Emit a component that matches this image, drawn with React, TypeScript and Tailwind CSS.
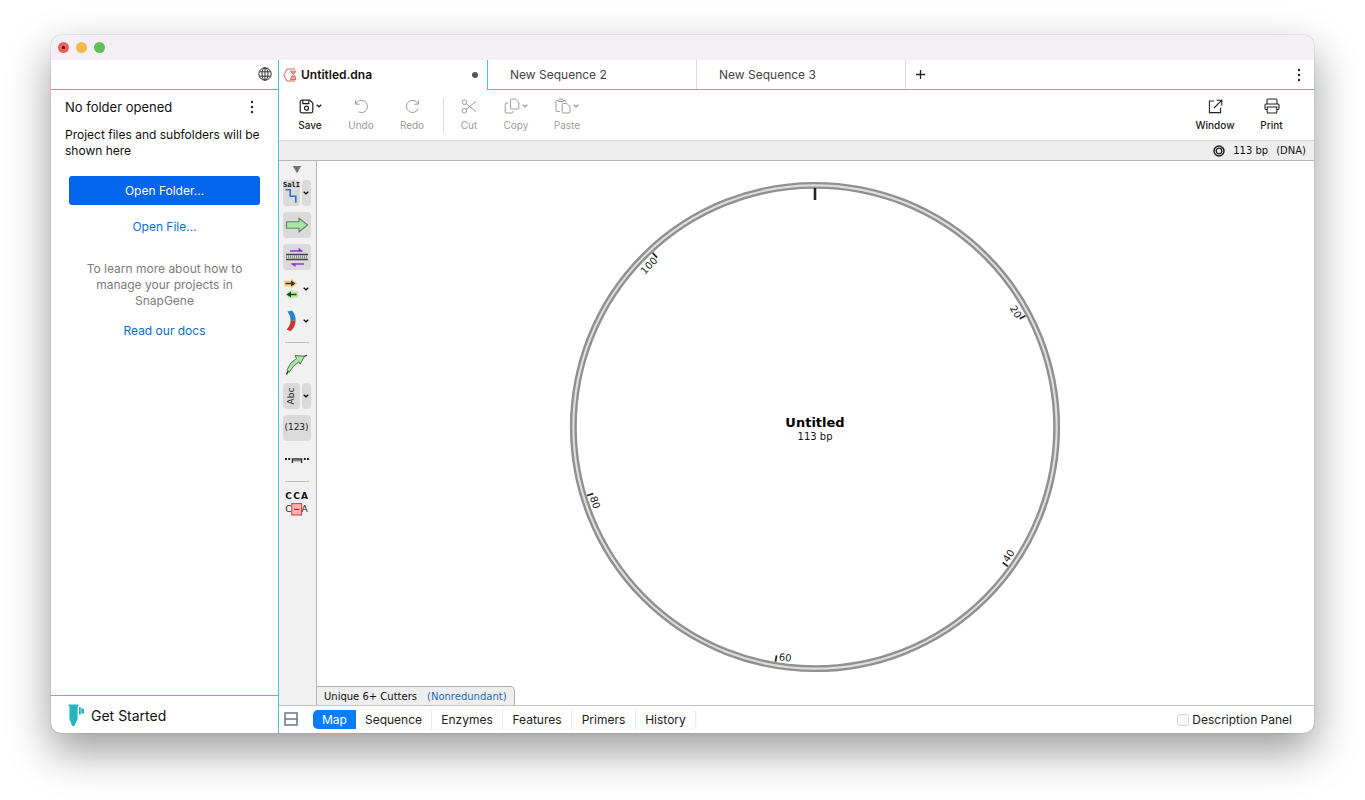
import { useState, type ReactNode } from "react";

const UI = "font-['Inter','Liberation_Sans',sans-serif]";
const MAP_FONT = "font-['DejaVu_Sans',sans-serif]";

function Globe() {
  return (
    <svg width="14" height="14" viewBox="0 0 14 14" fill="none" stroke="#333" strokeWidth="1">
      <circle cx="7" cy="7" r="6.2" />
      <ellipse cx="7" cy="7" rx="3" ry="6.2" />
      <path d="M7 1v12M1.6 4.8h10.8M1.6 9.2h10.8" />
    </svg>
  );
}

function Dots() {
  return (
    <svg width="4" height="14" viewBox="0 0 4 14" fill="#222">
      <circle cx="2" cy="2" r="1.2" />
      <circle cx="2" cy="7" r="1.2" />
      <circle cx="2" cy="12" r="1.2" />
    </svg>
  );
}

function Caret() {
  return (
    <svg width="6" height="4" viewBox="0 0 6 4" fill="none" stroke="currentColor" strokeWidth="1.3">
      <path d="M0.7 0.8L3 2.8L5.3 0.8" />
    </svg>
  );
}

function DnaFileIcon() {
  return (
    <svg width="14" height="14" viewBox="0 0 14 14" fill="none" stroke="#e0605c" strokeWidth="1">
      <path d="M12 1H4L0.8 7L4 13H12" />
      <path d="M7.2 3.2H13M7.2 11.6H13M8 3.2C8 6.2 12.4 6.4 12.4 9.4V11.6M12.4 3.2C12.4 6.2 7.8 6.8 7.8 11.6M8.6 4.8h3.4M8.2 10h4M9 8.6h3" />
    </svg>
  );
}

function TubeIcon() {
  return (
    <svg width="17" height="23" viewBox="0 0 17 23" fill="#25b5c3">
      <path d="M0.5 0.5H10.5V2.2H9.6V15L6.6 21.5Q5.2 23 4 21.5L1.4 15V2.2H0.5Z" />
      <path d="M11 3.2H13V4.5H16V9.5H13V10.5H11Z" />
      <path d="M13 3.2V10.5" stroke="#fff" strokeWidth="0.5" />
    </svg>
  );
}

function SaveIcon() {
  return (
    <svg width="15" height="15" viewBox="0 0 15 15" fill="none" stroke="currentColor" strokeWidth="1.2">
      <path d="M3 1.2H10.8L13.8 4.2V12Q13.8 13.8 12 13.8H3Q1.2 13.8 1.2 12V3Q1.2 1.2 3 1.2Z" />
      <path d="M3.8 1.4V4.6H9.8V1.4" />
      <circle cx="7.5" cy="9.2" r="2" />
    </svg>
  );
}

function UndoIcon() {
  return (
    <svg width="15" height="15" viewBox="0 0 15 15" fill="none" stroke="currentColor" strokeWidth="1">
      <path d="M1.5 1.2V5.2H5.6" />
      <path d="M1.8 5A6.1 6.1 0 1 1 4.4 12.8" />
    </svg>
  );
}

function RedoIcon() {
  return (
    <svg width="15" height="15" viewBox="0 0 15 15" fill="none" stroke="currentColor" strokeWidth="1">
      <path d="M13.4 1.2V5.2H9.3" />
      <path d="M13.1 5A6.1 6.1 0 1 0 13.2 9.6" />
    </svg>
  );
}

function CutIcon() {
  return (
    <svg width="16" height="15" viewBox="0 0 16 15" fill="none" stroke="currentColor" strokeWidth="1">
      <circle cx="3.4" cy="3.2" r="2.3" />
      <circle cx="3.4" cy="11.8" r="2.3" />
      <path d="M5.2 4.7L15 12.6M5.2 10.3L15 2.4" />
    </svg>
  );
}

function CopyIcon() {
  return (
    <svg width="16" height="16" viewBox="0 0 16 16" fill="none" stroke="currentColor" strokeWidth="1">
      <path d="M7.5 1H11.5L14.8 4.3V10Q14.8 11 13.8 11H7.5Q6.5 11 6.5 10V2Q6.5 1 7.5 1Z" />
      <path d="M4.4 5H2.2Q1.2 5 1.2 6V14Q1.2 15 2.2 15H7.8Q8.8 15 8.8 14V13.2" />
    </svg>
  );
}

function PasteIcon() {
  return (
    <svg width="16" height="16" viewBox="0 0 16 16" fill="none" stroke="currentColor" strokeWidth="1">
      <path d="M3 2.5H2Q1 2.5 1 3.5V12.5Q1 13.5 2 13.5H4.8M9 2.5H10.4V4" />
      <path d="M3.4 3.4V2L4.8 0.9H7L8.4 2V3.4Z" />
      <path d="M8.2 5.5H11.8L15 8.7V14Q15 15 14 15H8.2Q7.2 15 7.2 14V6.5Q7.2 5.5 8.2 5.5Z" />
    </svg>
  );
}

function WindowIcon() {
  return (
    <svg width="15" height="15" viewBox="0 0 15 15" fill="none" stroke="currentColor" strokeWidth="1.1">
      <path d="M6 2H1.4V13.6H12.6V9" />
      <path d="M8.6 1.2H13.8V6.4M13.6 1.4L6 9" />
    </svg>
  );
}

function PrintIcon() {
  return (
    <svg width="16" height="16" viewBox="0 0 16 16" fill="none" stroke="currentColor" strokeWidth="1.1">
      <path d="M3 6V2.5Q3 1 4.5 1H11.5Q13 1 13 2.5V6" />
      <path d="M3 11.5H2.2Q1 11.5 1 10.3V7.2Q1 6 2.2 6H13.8Q15 6 15 7.2V10.3Q15 11.5 13.8 11.5H13" />
      <path d="M3.2 9H12.8V14Q12.8 15 11.8 15H4.2Q3.2 15 3.2 14Z" />
    </svg>
  );
}

function ToolbarButton(props: { label: string; icon: ReactNode; width: string; menu?: boolean; active?: boolean }) {
  return (
    <button
      type="button"
      disabled={!props.active}
      className={`flex flex-col items-center gap-1 ${props.width} ${props.active ? "text-[#222]" : "text-[#9b9b9b]"}`}
    >
      <span className="flex h-4 items-center gap-0.5">
        {props.icon}
        {props.menu && <Caret />}
      </span>
      <span className={`text-[10px] leading-[14px] ${props.active ? "font-medium" : ""}`}>{props.label}</span>
    </button>
  );
}

function ToolButton(props: { label: string; children: ReactNode; filled?: boolean; menu?: boolean }) {
  const fill = props.filled ? "bg-[#dadada]" : "";
  if (!props.menu) {
    return (
      <button
        type="button"
        aria-label={props.label}
        className={`flex h-[26px] w-7 shrink-0 items-center justify-center rounded ${fill}`}
      >
        {props.children}
      </button>
    );
  }
  return (
    <div className="flex h-[26px] w-7 shrink-0 justify-between">
      <button type="button" aria-label={props.label} className={`flex w-[17px] items-center justify-center rounded ${fill}`}>
        {props.children}
      </button>
      <button type="button" aria-label={`${props.label} options`} className={`flex w-[9px] items-center justify-center rounded ${fill}`}>
        <Caret />
      </button>
    </div>
  );
}

function Divider() {
  return <div className="my-[2px] h-px w-6 shrink-0 bg-[#bdbdbd]" />;
}

function ToolColumn() {
  return (
    <div className="flex w-[38px] shrink-0 flex-col items-center gap-1.5 border-r border-[#b4b4b4] bg-[#f1f1f1] pr-[2px] pt-[3px]">
      <svg width="10" height="10" viewBox="0 0 10 10" className="shrink-0">
        <path d="M0.8 2H9.2L5 9.2Z" fill="#707070" />
      </svg>
      <ToolButton label="Enzymes" filled menu>
        <svg width="17" height="26" viewBox="0 0 17 26" className="overflow-visible">
          <text x="8.5" y="6.6" textAnchor="middle" fontSize="7" fontWeight="700" className="font-['DejaVu_Sans_Mono','DejaVu_Sans',monospace]" fill="#111">
            SalI
          </text>
          <path d="M2.5 9.8H7.2V16.2H12.8V22.8" fill="none" stroke="#2f6fce" strokeWidth="1.6" />
        </svg>
      </ToolButton>
      <ToolButton label="Features" filled>
        <svg width="24" height="16" viewBox="0 0 24 16">
          <path d="M1.5 4.8H14V1.2L22.6 8L14 14.8V11.2H1.5Z" fill="#a6e8a2" stroke="#6d7d6c" strokeWidth="1.1" />
        </svg>
      </ToolButton>
      <ToolButton label="Primers" filled>
        <svg width="24" height="20" viewBox="0 0 24 20" fill="none">
          <path d="M1 7.5H23M1 12.5H23" stroke="#444" strokeWidth="1.3" />
          <path d="M1 10H23" stroke="#888" strokeWidth="3" strokeDasharray="1 1" />
          <path d="M5 4H17M19 17H7" stroke="#9434e0" strokeWidth="1.3" />
          <path d="M13.5 0.8L18.5 4.4H13.5ZM10.5 20L5.5 16.4H10.5Z" fill="#9434e0" />
        </svg>
      </ToolButton>
      <ToolButton label="ORFs" menu>
        <svg width="17" height="22" viewBox="0 0 17 22">
          <path d="M1 2.5H8V0.5L14.5 5.5L8 10.5V8.5H1Z" fill="#fbcf85" />
          <path d="M15 13.5H8.5V11.5L2 16.5L8.5 21.5V19.5H15Z" fill="#aef28a" />
          <path d="M2.5 5.5H10M13.5 16.5H6" stroke="#333" strokeWidth="1.6" />
          <path d="M8 2.6L12.5 5.5L8 8.4ZM8 13.6L3.5 16.5L8 19.4Z" fill="#333" />
        </svg>
      </ToolButton>
      <ToolButton label="Translation" menu>
        <svg width="12" height="22" viewBox="0 0 12 22">
          <path d="M2.5 1.5L7 0.5Q11 5 10.6 10.8H5.6Q5.6 5.5 2.5 1.5Z" fill="#2c82c9" />
          <path d="M5.6 10.8H10.6Q10.2 17.5 5.6 21.2L1.8 19.4Q5.4 15.6 5.6 10.8Z" fill="#cf3433" />
        </svg>
      </ToolButton>
      <Divider />
      <ToolButton label="Feature orientation">
        <svg width="24" height="24" viewBox="0 0 24 24">
          <path d="M1.5 22.5L3.5 18.5M18.5 5L22 3" stroke="#333" strokeWidth="1.4" />
          <path d="M2.2 17.5Q5 10 11.5 6.5L10 3.5L19.5 4.2L15.2 12.2L13.8 9.8Q8 13.5 4 20.5Z" fill="#a6e8a2" stroke="#5c6d5b" strokeWidth="1" />
        </svg>
      </ToolButton>
      <ToolButton label="Labels" filled menu>
        <svg width="14" height="24" viewBox="0 0 14 24">
          <text transform="translate(10 12) rotate(-90)" textAnchor="middle" fontSize="9" className={MAP_FONT} fill="#222">
            Abc
          </text>
        </svg>
      </ToolButton>
      <ToolButton label="Numbering" filled>
        <span className={`${MAP_FONT} text-[9px] text-[#222]`}>(123)</span>
      </ToolButton>
      <ToolButton label="Line spacing">
        <svg width="24" height="8" viewBox="0 0 24 8">
          <path d="M0 3H2M3.2 3H5.2M18.8 3H20.8M22 3H24" stroke="#222" strokeWidth="1.8" />
          <path d="M7.4 7V3H16.6V7" fill="none" stroke="#333" strokeWidth="1.4" />
          <path d="M8 4.6H16" stroke="#888" strokeWidth="1.6" />
        </svg>
      </ToolButton>
      <Divider />
      <ToolButton label="Alignment">
        <svg width="24" height="26" viewBox="0 0 24 26" className={`${MAP_FONT} overflow-visible`} textAnchor="middle" fontSize="9">
          <rect x="6.8" y="13.6" width="9.8" height="11.4" fill="#ffb3b3" stroke="#d93a3a" />
          <g fontWeight="700" fill="#111">
            <text x="3.5" y="9.4">C</text>
            <text x="11.5" y="9.4">C</text>
            <text x="19.6" y="9.4">A</text>
          </g>
          <g fill="#222">
            <text x="3.5" y="22.4">C</text>
            <text x="19.6" y="22.4">A</text>
          </g>
          <path d="M9 19.4H14.4" stroke="#922" strokeWidth="1" />
        </svg>
      </ToolButton>
    </div>
  );
}

const SEQUENCE_LENGTH = 113;
const marks = [
  { bp: 20, flipped: false, shift: -2 },
  { bp: 40, flipped: true, shift: -2.2 },
  { bp: 60, flipped: true, shift: -2.2 },
  { bp: 80, flipped: true, shift: -2.2 },
  { bp: 100, flipped: false, shift: -2.8 },
];

function PlasmidMap() {
  return (
    <svg viewBox="-246 -246 492 492" className={`${MAP_FONT} w-[492px] max-w-full`} role="img" aria-label="Plasmid map">
      <circle r="241.6" fill="none" stroke="#dedede" strokeWidth="4" />
      <circle r="243.9" fill="none" stroke="#909090" strokeWidth="2.4" />
      <circle r="239.4" fill="none" stroke="#909090" strokeWidth="2.4" />
      <path d="M0 -239V-227" stroke="#222" strokeWidth="2.6" />
      {marks.map((m) => {
        const angle = ((m.bp - 0.5) / SEQUENCE_LENGTH) * 360;
        return (
          <g key={m.bp}>
            <path d="M0 -238V-231.5" stroke="#222" strokeWidth="1.8" transform={`rotate(${angle})`} />
            <text
              transform={`rotate(${angle + m.shift}) translate(0 -232) rotate(${m.flipped ? 180 : 0})`}
              y="4"
              textAnchor="middle"
              fontSize="10"
              fill="#222"
            >
              {m.bp}
            </text>
          </g>
        );
      })}
      <text y="0" textAnchor="middle" fontSize="13" fontWeight="700" fill="#000">
        Untitled
      </text>
      <text y="13" textAnchor="middle" fontSize="10" fill="#111">
        113 bp
      </text>
    </svg>
  );
}

function Sidebar() {
  return (
    <aside className="flex w-[228px] shrink-0 flex-col border-r border-[#4fc1c9]">
      <div className="flex h-[30px] items-center justify-end border-b border-[#4fc1c9] px-[6px] pb-0.5">
        <button type="button" aria-label="Language">
          <Globe />
        </button>
      </div>
      <div className="flex flex-1 flex-col px-[14px] pt-[7px]">
        <div className="flex items-center justify-between pr-[10px]">
          <h2 className="text-[13px] leading-5 text-[#111]">No folder opened</h2>
          <button type="button" aria-label="Folder menu">
            <Dots />
          </button>
        </div>
        <p className="mt-2.5 whitespace-nowrap text-[12px] leading-4 text-[#111]">
          Project files and subfolders will be
          <br />
          shown here
        </p>
        <div className="mt-[17px] flex flex-col items-center pl-1 pr-1 text-[12px]">
          <button type="button" className="h-[29px] w-full rounded-[3px] bg-[#0364ec] text-white">
            Open Folder...
          </button>
          <button type="button" className="mt-3.5 leading-4 text-[#0a70d8]">
            Open File...
          </button>
          <p className="mt-[26px] text-center leading-4 text-[#7c7c7c]">
            To learn more about how to
            <br />
            manage your projects in
            <br />
            SnapGene
          </p>
          <a href="#docs" className="mt-3.5 leading-4 text-[#0a6cc4]">
            Read our docs
          </a>
        </div>
      </div>
      <button type="button" className="flex h-[38px] items-center gap-1.5 border-t border-[#4fc1c9] px-[17px] pt-0.5 text-sm text-[#111]">
        <TubeIcon />
        Get Started
      </button>
    </aside>
  );
}

function TabBar() {
  return (
    <div className="flex h-[30px] text-[12px]">
      <button type="button" className="flex w-[208px] items-center gap-1 px-1 font-semibold text-[#111]">
        <DnaFileIcon />
        <span className="flex-1 text-left">Untitled.dna</span>
        <span className="mr-[5px] h-1.5 w-1.5 rounded-full bg-[#555]" />
      </button>
      <div className="flex flex-1 border-b border-l border-[#4fc1c9] text-[#444]">
        <button type="button" className="w-[209px] border-r border-[#dcdcdc] px-[22px] text-left">
          New Sequence 2
        </button>
        <button type="button" className="w-[209px] border-r border-[#dcdcdc] px-[22px] text-left">
          New Sequence 3
        </button>
        <button type="button" aria-label="New tab" className="flex w-[29px] items-center justify-center">
          <svg width="9" height="9" viewBox="0 0 9 9" stroke="#222" strokeWidth="1.3">
            <path d="M4.5 0V9M0 4.5H9" />
          </svg>
        </button>
        <button type="button" aria-label="More" className="ml-auto mr-[13px]">
          <Dots />
        </button>
      </div>
    </div>
  );
}

function Toolbar() {
  return (
    <div className="flex h-[51px] items-start border-b border-[#dcdcdc] pt-2">
      <ToolbarButton label="Save" icon={<SaveIcon />} width="w-[62px]" menu active />
      <ToolbarButton label="Undo" icon={<UndoIcon />} width="w-[40px]" />
      <ToolbarButton label="Redo" icon={<RedoIcon />} width="w-[62px]" />
      <div className="h-[35px] w-px bg-[#dcdcdc]" />
      <ToolbarButton label="Cut" icon={<CutIcon />} width="w-[50px]" />
      <ToolbarButton label="Copy" icon={<CopyIcon />} width="w-[44px]" menu />
      <ToolbarButton label="Paste" icon={<PasteIcon />} width="w-[58px]" menu />
      <div className="ml-auto flex pr-[14px]">
        <ToolbarButton label="Window" icon={<WindowIcon />} width="w-[56px]" active />
        <ToolbarButton label="Print" icon={<PrintIcon />} width="w-[57px]" active />
      </div>
    </div>
  );
}

const views = [
  { name: "Map", width: "w-[43px]" },
  { name: "Sequence", width: "w-[76px]" },
  { name: "Enzymes", width: "w-[71px]" },
  { name: "Features", width: "w-[69px]" },
  { name: "Primers", width: "w-[64px]" },
  { name: "History", width: "w-[60px]" },
];

function BottomBar() {
  const [view, setView] = useState("Map");
  return (
    <div className="flex h-7 items-center border-t border-[#c4c4c4] text-[12px] text-[#222]">
      <button type="button" aria-label="Split view" className="ml-[5px] mr-[15px] pb-0.5">
        <svg width="14" height="14" viewBox="0 0 14 14" fill="none" stroke="#6a7685" strokeWidth="1.5">
          <path d="M1 1H13V13H1ZM1 7H13" />
        </svg>
      </button>
      <div className="flex h-[19px] overflow-hidden rounded-[5px] shadow-[0_0_1px_rgba(0,0,0,0.3)]">
        {views.map((v) => (
          <button
            key={v.name}
            type="button"
            onClick={() => setView(v.name)}
            className={`${v.width} ${v.name === view ? "bg-[#0a7cff] text-white" : "border-r border-[#ececec]"}`}
          >
            {v.name}
          </button>
        ))}
      </div>
      <label className="ml-auto mr-[22px] flex items-center gap-[3px]">
        <input type="checkbox" className="h-3 w-3 appearance-none rounded-[3px] border border-[#d4d4d4] bg-white checked:bg-[#0a7cff]" />
        Description Panel
      </label>
    </div>
  );
}

export default function App() {
  return (
    <div className={`${UI} flex min-h-screen bg-white px-[51px] pb-[67px] pt-[35px]`}>
      <div className="flex min-w-0 flex-1 flex-col overflow-hidden rounded-[10px] bg-white shadow-[0_0_1px_rgba(0,0,0,0.5),0_18px_44px_rgba(0,0,0,0.4)]">
        <header className="flex h-[25px] items-center gap-[7px] bg-[#f3eff4] px-[7px]">
          <button type="button" aria-label="Close" className="flex h-[11px] w-[11px] items-center justify-center rounded-full bg-[#e4635c]">
            <span className="h-[3px] w-[3px] rounded-full bg-[#5c0b06]" />
          </button>
          <button type="button" aria-label="Minimize" className="h-[11px] w-[11px] rounded-full bg-[#efbb4e]" />
          <button type="button" aria-label="Zoom" className="h-[11px] w-[11px] rounded-full bg-[#5dc254]" />
        </header>
        <div className="flex flex-1">
          <Sidebar />
          <main className="flex min-w-0 flex-1 flex-col">
            <TabBar />
            <Toolbar />
            <div className={`${MAP_FONT} flex h-5 items-center justify-end gap-2 border-b border-[#b8b8b8] bg-[#eeeeee] px-2 text-[10px] text-[#111]`}>
              <svg width="12" height="12" viewBox="0 0 12 12" fill="none" stroke="#222">
                <circle cx="6" cy="6" r="5" strokeWidth="1.5" />
                <circle cx="6" cy="6" r="2.8" strokeWidth="1.3" />
              </svg>
              <span>113 bp</span>
              <span>(DNA)</span>
            </div>
            <div className="flex flex-1">
              <ToolColumn />
              <div className="flex min-w-0 flex-1 flex-col">
                <div className="flex flex-1 items-center justify-center pr-px pt-1.5">
                  <PlasmidMap />
                </div>
                <div className={`${MAP_FONT} flex h-[19px] items-center gap-2.5 self-start rounded-tr-[5px] border-r border-t border-[#b0b0b0] bg-[#eeeeee] px-[7px] text-[10px] text-[#111]`}>
                  <span>Unique 6+ Cutters</span>
                  <a href="#enzymes" className="text-[#1a6cc0]">
                    (Nonredundant)
                  </a>
                </div>
              </div>
            </div>
            <BottomBar />
          </main>
        </div>
      </div>
    </div>
  );
}
